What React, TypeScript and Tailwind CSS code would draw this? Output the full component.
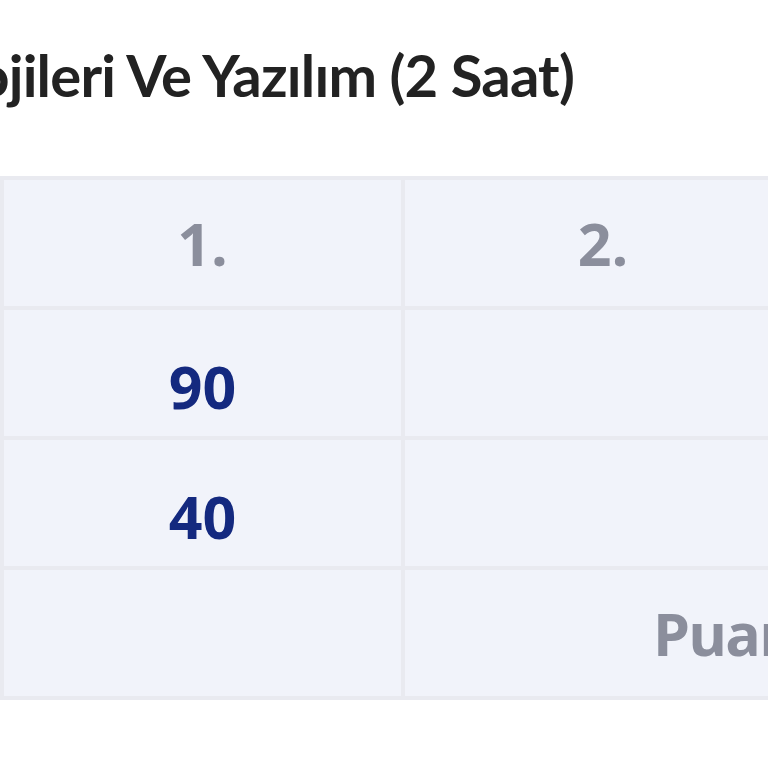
import React from 'react';

const rows = [
  { first: '90', rest: ['', ''] },
  { first: '40', rest: ['', ''] },
];

const cell = 'h-[130px] flex items-center justify-center border-r-4 border-b-4 border-[#e9eaf0] bg-[#f1f3fa]';

const App: React.FC = () => {
  return (
    <div className="w-[768px] h-[768px] overflow-hidden bg-white" style={{ fontFamily: '"Open Sans", sans-serif' }}>
      {/* Title, left part is cut off by the frame */}
      <div className="w-[574px] pt-[43px] h-[176px] flex justify-end">
        <h2 className="whitespace-nowrap text-[58px] leading-[64px] font-bold tracking-[-0.014em] text-[#222222] font-['Lato',sans-serif]">
          Bilişim Teknolojileri Ve Yazılım (2 Saat)
        </h2>
      </div>

      <div className="w-[1205px] border-l-4 border-t-4 border-[#e9eaf0] grid grid-cols-[401px_400px_400px] font-bold text-[59px]">
        <div className={`${cell} text-[#8b8e9c]`}>1.</div>
        <div className={`${cell} text-[#8b8e9c]`}>2.</div>
        <div className={`${cell} text-[#8b8e9c]`}>3.</div>

        {rows.map((r, i) => (
          <React.Fragment key={i}>
            <div className={`${cell} pt-[26px] text-[#14297f]`}>{r.first}</div>
            {r.rest.map((v, j) => (
              <div key={j} className={`${cell} pt-[26px] text-[#14297f]`}>{v}</div>
            ))}
          </React.Fragment>
        ))}

        <div className={cell}></div>
        <div className={`${cell} col-span-2 !justify-start pl-[248px] tracking-[-0.03em] text-[#8b8e9c]`}>Puan Toplamı</div>
      </div>
    </div>
  );
};

export default App;
